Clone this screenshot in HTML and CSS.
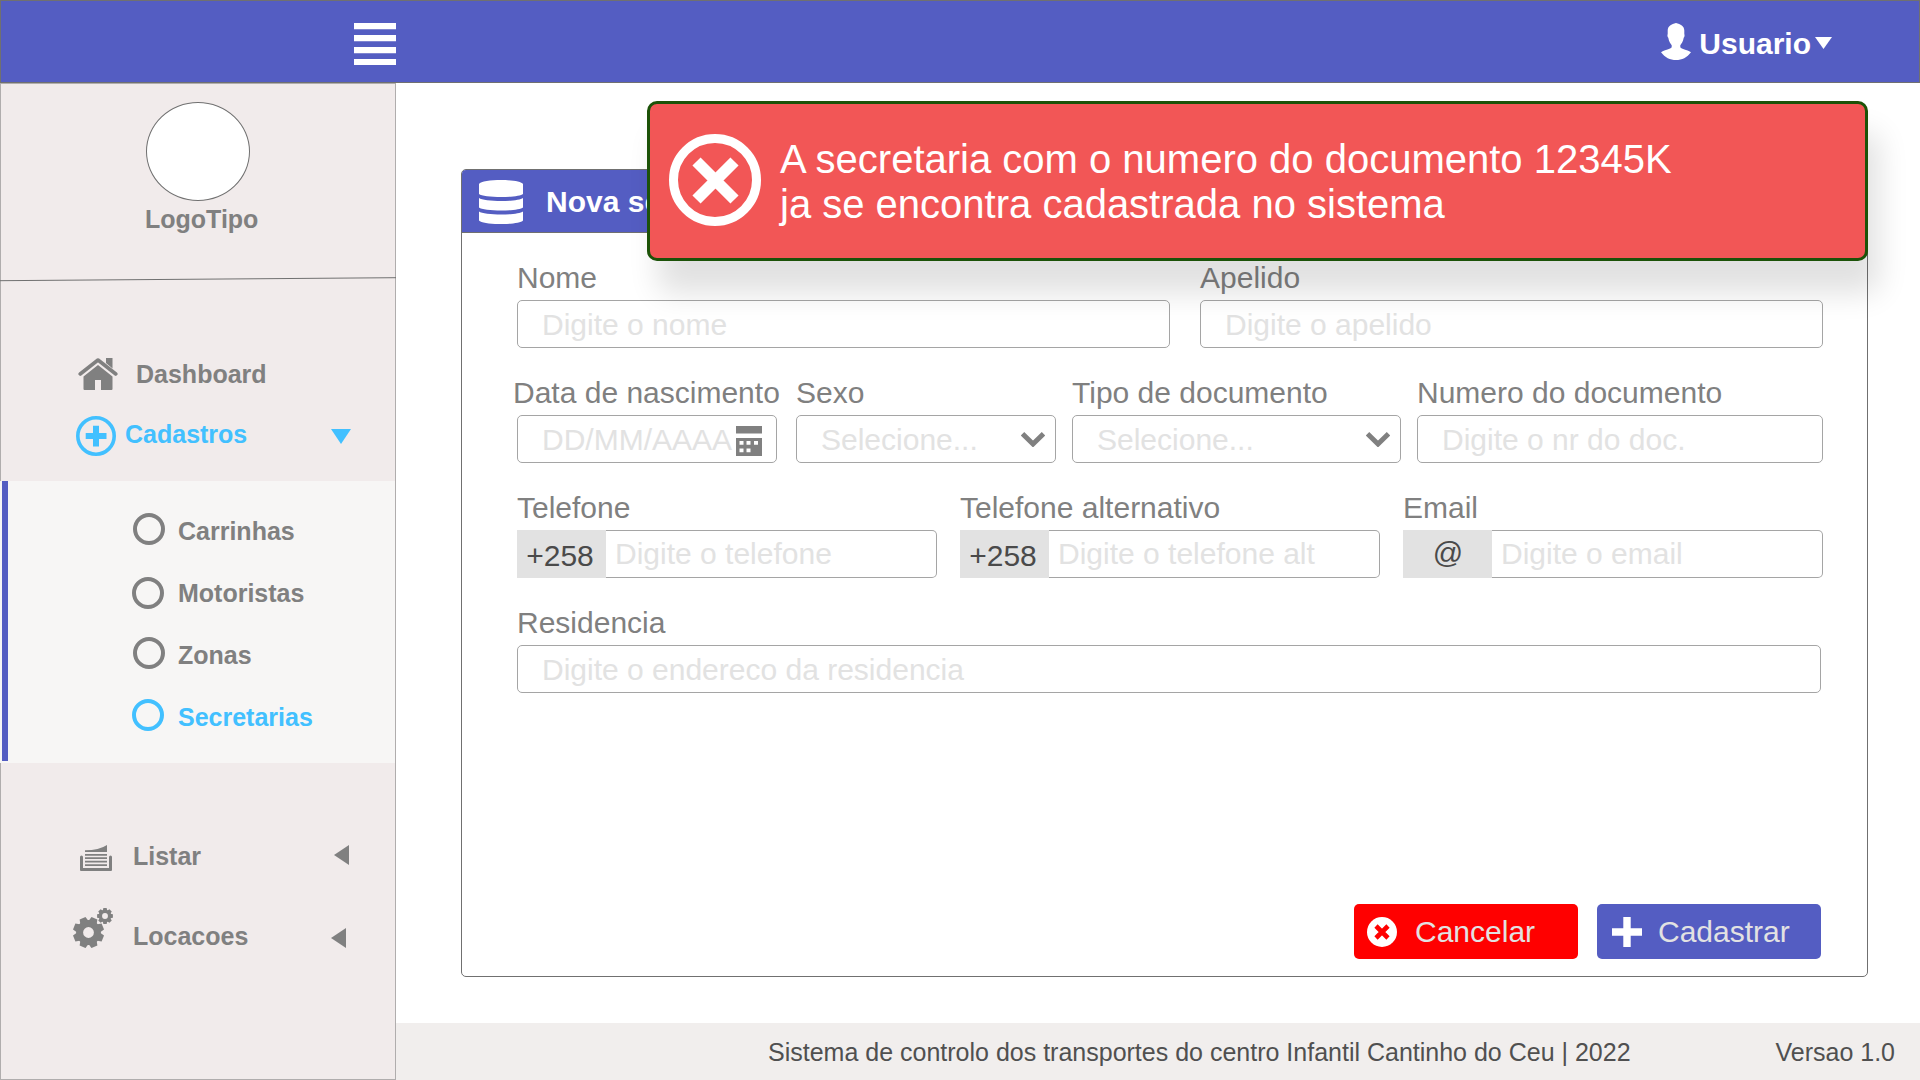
FILE: index.html
```html
<!DOCTYPE html>
<html lang="pt">
<head>
<meta charset="utf-8">
<title>Nova secretaria</title>
<link rel="stylesheet" href="styles.css">
</head>
<body>
<header class="topbar">
  <svg class="menu-icon" viewBox="0 0 42 42"><path fill="#fff" d="M0 0h42v6.3H0zM0 12h42v6.3H0zM0 24h42v6.3H0zM0 36h42v6H0z"/></svg>
  <div class="user">
    <svg class="user-icon" viewBox="0 0 30 37"><path fill="#fff" d="M15 0c4.500 1 8.300 3 8.300 7.500v3.500c.5 1 .3 3-.6 3.800-.6 3.700-2 5.700-3.400 7.400v2c1.500 2 6.200 2.300 10.700 5C26 34.500 21 37 15 37S4 34.500 0 29.200c4.500-2.700 9.200-3 10.700-5v-2c-1.400-1.700-2.800-3.700-3.400-7.400-.9-.8-1.100-2.800-.6-3.800V7.500C6.700 3 10.500 1 15 0z"/></svg>
    <span>Usuario</span>
    <svg class="user-caret" viewBox="0 0 17 12"><path fill="#fff" d="M0 0h17L8.500 12z"/></svg>
  </div>
</header>
<div class="layout">
  <aside class="sidebar">
    <div class="brand">
      <div class="brand-logo"></div>
      <div class="brand-name">LogoTipo</div>
    </div>
    <svg class="brand-rule" viewBox="0 0 396 5"><path stroke="#707070" d="M0 3.700 396 .7"/></svg>
    <nav>
      <div class="nav-item dashboard">
        <svg class="home-icon" viewBox="0 0 40 32"><path d="M28 0h6.500v10.500L28 5z"/><path fill="none" stroke="#808080" stroke-width="3.600" stroke-linecap="round" stroke-linejoin="round" d="M2.200 16 20 2 37.800 16"/><path d="M20 7 34.500 18.500V31q0 1-1 1H23V22h-6v10H6.500q-1 0-1-1V18.500z"/></svg>
        <span>Dashboard</span>
      </div>
      <div class="nav-item cadastros active">
        <svg class="plus-icon" viewBox="0 0 40 40"><circle cx="20" cy="20" r="18.200" fill="none" stroke="#42c0ff" stroke-width="3.600"/><path d="M17 9.800h6V17h7.500v6H23v7.500h-6V23H9.700v-6H17z"/></svg>
        <span>Cadastros</span>
        <svg class="caret-down" viewBox="0 0 20 15"><path d="M0 0h20L10 15z"/></svg>
      </div>
      <div class="submenu">
        <div class="sub-item"><i class="ring ring-right"></i><span>Carrinhas</span></div>
        <div class="sub-item"><i class="ring ring-mid"></i><span>Motoristas</span></div>
        <div class="sub-item"><i class="ring ring-right"></i><span>Zonas</span></div>
        <div class="sub-item active"><i class="ring"></i><span>Secretarias</span></div>
      </div>
      <div class="nav-item listar">
        <svg class="list-icon" viewBox="0 0 32 26"><path d="M5 5.300Q19 5.300 27 0v7H5zM5 9h22v1.800H5zM5 12.300h22v1.800H5zM5 15.800h22v1.800H5zM5 19.200h22V21H5z"/><path d="M0 12q0-1.500 1.500-1.500T3 12v11h26V12q0-1.500 1.500-1.500T32 12v13q0 1-1 1H1q-1 0-1-1z"/></svg>
        <span>Listar</span>
        <svg class="caret-left" viewBox="0 0 15 20"><path d="M15 0v20L0 10z"/></svg>
      </div>
      <div class="nav-item locacoes">
        <svg class="gears-icon" viewBox="0 0 40 40">
          <defs><path id="tooth" d="M-4.500-10-3.200-15.500h6.400L4.500-10z"/></defs>
          <g transform="translate(15.500 24.500)">
            <circle r="8.900" fill="none" stroke="#808080" stroke-width="7"/>
            <use href="#tooth" transform="rotate(22.500)"/><use href="#tooth" transform="rotate(67.500)"/><use href="#tooth" transform="rotate(112.500)"/><use href="#tooth" transform="rotate(157.500)"/><use href="#tooth" transform="rotate(202.500)"/><use href="#tooth" transform="rotate(247.500)"/><use href="#tooth" transform="rotate(292.500)"/><use href="#tooth" transform="rotate(337.500)"/>
          </g>
          <g transform="translate(32 8) scale(.51)">
            <circle r="9" fill="none" stroke="#808080" stroke-width="6.500"/>
            <use href="#tooth"/><use href="#tooth" transform="rotate(45)"/><use href="#tooth" transform="rotate(90)"/><use href="#tooth" transform="rotate(135)"/><use href="#tooth" transform="rotate(180)"/><use href="#tooth" transform="rotate(225)"/><use href="#tooth" transform="rotate(270)"/><use href="#tooth" transform="rotate(315)"/>
          </g>
        </svg>
        <span>Locacoes</span>
        <svg class="caret-left" viewBox="0 0 15 20"><path d="M15 0v20L0 10z"/></svg>
      </div>
    </nav>
  </aside>
  <div class="content">
    <main>
      <section class="card">
        <div class="card-header">
          <svg class="db-icon" viewBox="0 0 44 44"><g fill="#fff"><path d="M0 4C3-1.300 41-1.300 44 4v10c-4 4-40 4-44 0z"/><path d="M0 18c5 4 39 4 44 0v9.500c-4 4-40 4-44 0z"/><path d="M0 31.500c5 4 39 4 44 0v9c-4 4.700-40 4.700-44 0z"/></g></svg>
          <span>Nova secretaria</span>
        </div>
        <div class="form">
          <div class="row row-name">
            <div class="field"><div class="label">Nome</div><div class="input">Digite o nome</div></div>
            <div class="field"><div class="label">Apelido</div><div class="input">Digite o apelido</div></div>
          </div>
          <div class="row row-doc">
            <div class="field field-date"><div class="label label-date">Data de nascimento</div><div class="input input-icon input-date">DD/MM/AAAA
              <svg class="calendar-icon" viewBox="0 0 26 30"><path fill="#808080" fill-rule="evenodd" d="M0 0h26v7.500H0zM0 12h26v18H0zM3.500 15v3.800h4V15zM10.500 15v3.800h4V15zM18 15v3.800h4V15zM3.500 22.500v3.800h4v-3.800zM10.500 22.500v3.800h4v-3.800z"/></svg></div></div>
            <div class="field"><div class="label">Sexo</div><div class="input input-icon">Selecione...
              <svg class="chevron" viewBox="0 0 24 15"><path fill="none" stroke="#808080" stroke-width="5" d="M1.500 1.800 12 12 22.500 1.800"/></svg></div></div>
            <div class="field"><div class="label">Tipo de documento</div><div class="input input-icon">Selecione...
              <svg class="chevron" viewBox="0 0 24 15"><path fill="none" stroke="#808080" stroke-width="5" d="M1.500 1.800 12 12 22.500 1.800"/></svg></div></div>
            <div class="field"><div class="label">Numero do documento</div><div class="input">Digite o nr do doc.</div></div>
          </div>
          <div class="row row-contact">
            <div class="field"><div class="label">Telefone</div><div class="group"><div class="prefix">+258</div><div class="input">Digite o telefone</div></div></div>
            <div class="field"><div class="label">Telefone alternativo</div><div class="group"><div class="prefix">+258</div><div class="input">Digite o telefone alt</div></div></div>
            <div class="field"><div class="label">Email</div><div class="group"><div class="prefix prefix-at">@</div><div class="input">Digite o email</div></div></div>
          </div>
          <div class="row row-address">
            <div class="field"><div class="label">Residencia</div><div class="input">Digite o endereco da residencia</div></div>
          </div>
        </div>
        <div class="actions">
          <div class="btn btn-cancel"><svg viewBox="0 0 30 30"><circle cx="15" cy="15" r="15" fill="#fff"/><path stroke="#f00" stroke-width="4.600" d="m9 9 12 12M21 9 9 21"/></svg><span>Cancelar</span></div>
          <div class="btn btn-save"><svg viewBox="0 0 30 30"><path fill="#fff" d="M11.300 0h7.400v11.300H30v7.400H18.700V30h-7.400V18.700H0v-7.400h11.300z"/></svg><span>Cadastrar</span></div>
        </div>
      </section>
    </main>
    <footer class="footer">
      <span>Sistema de controlo dos transportes do centro Infantil Cantinho do Ceu | 2022</span>
      <span>Versao 1.0</span>
    </footer>
  </div>
</div>
<div class="alert">
  <svg class="alert-icon" viewBox="0 0 92 92"><circle cx="46" cy="46" r="41.500" fill="none" stroke="#fff" stroke-width="9"/><path stroke="#fff" stroke-width="11.500" d="m27.500 27.500 38 38M65.500 27.500l-38 38"/></svg>
  <p>A secretaria com o numero do documento 12345K<br>ja se encontra cadastrada no sistema</p>
</div>
</body>
</html>
```
FILE: styles.css
```css
* { box-sizing: border-box; }

body {
  margin: 0;
  width: 1920px;
  height: 1080px;
  overflow: hidden;
  display: flex;
  flex-direction: column;
  background: #fff;
  color: #808080;
  font: 30px/33px "Liberation Sans", Arial, sans-serif;
}

svg { display: block; flex: none; }
span { white-space: nowrap; }

/* Top bar */
.topbar {
  height: 83px;
  flex: none;
  display: flex;
  justify-content: space-between;
  padding: 22px 87px 0 353px;
  background: #545dc2;
  border: 1px solid #707070;
}
.menu-icon { width: 42px; height: 42px; }
.user {
  display: flex;
  align-items: flex-start;
  color: #fff;
  font-weight: bold;
}
.user-icon { width: 30px; height: 37px; margin-right: 8px; }
.user span { margin-top: 4px; }
.user-caret { width: 17px; height: 12px; margin: 14px 0 0 4px; }

.layout { flex: 1; display: flex; min-height: 0; }

/* Sidebar */
.sidebar {
  width: 396px;
  flex: none;
  background: #f1ebeb;
  border: 1px solid #b0adad;
  font-weight: bold;
  font-size: 25px;
  line-height: 28px;
}
.sidebar svg { fill: #808080; }
.brand { height: 193px; padding: 18px 0 0 144px; }
.brand-logo {
  width: 104px;
  height: 99px;
  margin-left: 1px;
  background: #fff;
  border: 1px solid #707070;
  border-radius: 50%;
}
.brand-name { margin-top: 4px; }
.brand-rule { width: 396px; height: 5px; margin-left: -1px; }
.nav-item { display: flex; align-items: center; height: 40px; }
.dashboard { margin-top: 72px; padding-left: 77px; }
.home-icon { width: 40px; height: 32px; margin-right: 18px; }
.cadastros { margin-top: 20px; padding: 0 44px 0 75px; }
.plus-icon { width: 40px; height: 40px; margin: 4px 9px 0 0; }
.caret-down { width: 20px; height: 15px; margin: 4px 0 0 auto; }
.active { color: #42c0ff; }
.sidebar .active svg { fill: #42c0ff; }

.submenu {
  height: 282px;
  margin: 27px 0 0 -1px;
  padding-top: 19px;
  background: linear-gradient(#545dc2, #545dc2) 2px 0 / 6px 280px no-repeat #f7f6f5;
}
.sub-item { display: flex; align-items: center; height: 62px; padding-left: 132px; }
.ring {
  width: 32px;
  height: 32px;
  margin: -4px 14px 0 0;
  border: 4px solid currentColor;
  border-radius: 50%;
}
.ring-right { margin: -4px 13px 0 1px; }
.ring-mid { margin-top: 0; }

.listar { margin-top: 73px; padding: 0 46px 0 79px; }
.list-icon { width: 32px; height: 26px; margin: 4px 21px 0 0; }
.caret-left { width: 15px; height: 20px; margin-left: auto; }
.listar .caret-left { margin-top: -2px; }
.locacoes { margin-top: 40px; padding: 0 49px 0 72px; }
.gears-icon { width: 40px; height: 40px; margin: -16px 20px 0 0; }
.locacoes .caret-left { margin-top: 4px; }

/* Content */
.content { flex: 1; display: flex; flex-direction: column; }
main { flex: 1; padding: 86px 52px 46px 65px; }
.card {
  height: 808px;
  display: flex;
  flex-direction: column;
  border: 1px solid #707070;
  border-radius: 5px;
}
.card-header {
  height: 63px;
  flex: none;
  display: flex;
  align-items: center;
  gap: 23px;
  padding-left: 17px;
  border-bottom: 1px solid #707070;
  border-radius: 4px 4px 0 0;
  background: #545dc2;
  color: #fff;
  font-weight: bold;
}
.db-icon { width: 44px; height: 44px; margin-top: 2px; }
.card-header span { margin-top: 1px; }

.form { padding: 28px 44px 0 55px; }
.row { display: grid; height: 115px; }
.row-name { grid-template-columns: 653px 623px; column-gap: 30px; }
.row-doc { grid-template-columns: 263px 260px 329px 406px; column-gap: 16px; }
.field-date { padding-right: 3px; }
.row-contact { grid-template-columns: repeat(3, 420px); column-gap: 23px; }
.row-address { grid-template-columns: 1304px; }
.label { height: 39px; white-space: nowrap; }
.label-date { margin-left: -4px; }
.input {
  height: 48px;
  padding: 7px 0 0 24px;
  border: 1px solid #a5a5a5;
  border-radius: 5px;
  color: #e2e2e2;
  white-space: nowrap;
}
.input-icon { display: flex; justify-content: space-between; padding-right: 10px; }
.input-date { padding-right: 14px; }
.calendar-icon { width: 26px; height: 30px; margin-top: 3px; }
.chevron { width: 24px; height: 15px; margin-top: 9px; }
.group { display: flex; }
.prefix {
  width: 89px;
  height: 48px;
  padding: 9px 3px 0 0;
  background: #e2e2e2;
  color: #4a4a4a;
  text-align: center;
}
.prefix-at { padding: 6px 0 0 1px; }
.group .input {
  flex: 1;
  padding: 6px 0 0 9px;
  border-left: 0;
  border-radius: 0 5px 5px 0;
}

.actions {
  display: flex;
  justify-content: flex-end;
  gap: 19px;
  margin: auto 46px 17px 0;
}
.btn {
  display: flex;
  align-items: center;
  width: 224px;
  height: 55px;
  border-radius: 5px;
  color: #e2e2e2;
}
.btn svg { width: 30px; height: 30px; margin-top: 1px; }
.btn-cancel { padding-left: 13px; gap: 18px; background: #f00; }
.btn-save { padding-left: 15px; gap: 16px; background: #545dc2; }

.footer {
  height: 57px;
  display: flex;
  align-items: center;
  justify-content: space-between;
  padding: 0 25px 0 372px;
  background: #f1eeed;
  color: #505050;
  font-size: 25px;
  line-height: 28px;
}

/* Error notification over the page */
.alert {
  position: absolute;
  left: 647px;
  top: 101px;
  width: 1221px;
  height: 160px;
  display: flex;
  gap: 19px;
  padding: 30px 0 0 19px;
  background: #f25656;
  border: 3px solid #1c5208;
  border-radius: 10px;
  box-shadow: 11px 32px 30px rgba(0, 0, 0, .12);
  color: #fff;
  font-size: 40px;
  line-height: 45px;
}
.alert-icon { width: 92px; height: 92px; }
.alert p { margin: 3px 0 0; }
```
